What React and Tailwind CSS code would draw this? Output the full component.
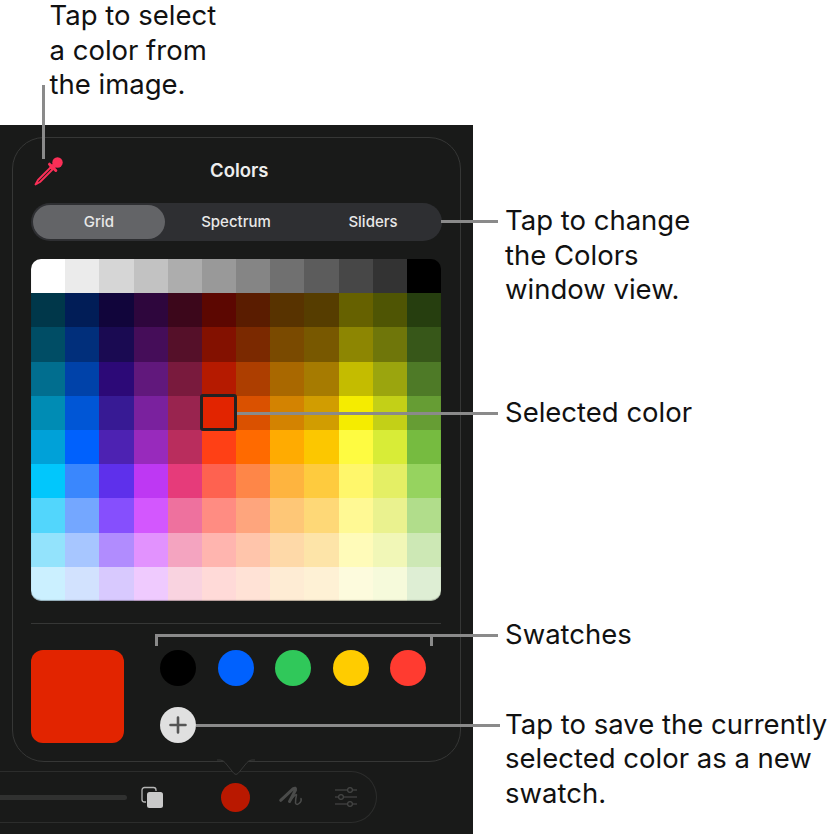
const COLORS = [
  'bg-[#FFFFFF]','bg-[#EBEBEB]','bg-[#D6D6D6]','bg-[#C2C2C2]','bg-[#ADADAD]','bg-[#999999]','bg-[#858585]','bg-[#707070]','bg-[#5C5C5C]','bg-[#474747]','bg-[#333333]','bg-[#000000]',
  'bg-[#00374A]','bg-[#011D57]','bg-[#11053B]','bg-[#2E063D]','bg-[#3C071B]','bg-[#5C0701]','bg-[#5A1C00]','bg-[#583300]','bg-[#563D00]','bg-[#666100]','bg-[#4F5504]','bg-[#263E0F]',
  'bg-[#004D65]','bg-[#012F7B]','bg-[#1A0A52]','bg-[#450D59]','bg-[#551029]','bg-[#831100]','bg-[#7B2900]','bg-[#7A4A00]','bg-[#785800]','bg-[#8D8602]','bg-[#6F760A]','bg-[#375719]',
  'bg-[#016E8F]','bg-[#0042A9]','bg-[#2C0977]','bg-[#61187C]','bg-[#791A3D]','bg-[#B51A00]','bg-[#AD3E00]','bg-[#A96800]','bg-[#A67B01]','bg-[#C4BC00]','bg-[#9BA50E]','bg-[#4E7A27]',
  'bg-[#008CB4]','bg-[#0056D6]','bg-[#371A94]','bg-[#7A219E]','bg-[#99244F]','bg-[#E22400]','bg-[#DA5100]','bg-[#D38301]','bg-[#D19D01]','bg-[#F5EC00]','bg-[#C3D017]','bg-[#669D34]',
  'bg-[#00A1D8]','bg-[#0061FD]','bg-[#4D22B2]','bg-[#982ABC]','bg-[#B92D5D]','bg-[#FF4015]','bg-[#FF6A00]','bg-[#FFAB01]','bg-[#FCC700]','bg-[#FEFB41]','bg-[#D8EC37]','bg-[#76BB40]',
  'bg-[#01C7FC]','bg-[#3A87FD]','bg-[#5E30EB]','bg-[#BE38F3]','bg-[#E63B7A]','bg-[#FE6250]','bg-[#FE8648]','bg-[#FEB43F]','bg-[#FECB3E]','bg-[#FFF76B]','bg-[#E4EF65]','bg-[#96D35F]',
  'bg-[#52D6FC]','bg-[#74A7FF]','bg-[#864FFD]','bg-[#D357FE]','bg-[#EE719E]','bg-[#FF8C82]','bg-[#FEA57D]','bg-[#FEC777]','bg-[#FED877]','bg-[#FFF994]','bg-[#EAF28F]','bg-[#B1DD8B]',
  'bg-[#93E3FC]','bg-[#A7C6FF]','bg-[#B18CFE]','bg-[#E292FE]','bg-[#F4A4C0]','bg-[#FFB5AF]','bg-[#FFC5AB]','bg-[#FED9A8]','bg-[#FDE4A8]','bg-[#FFFBB9]','bg-[#F1F7B7]','bg-[#CDE8B5]',
  'bg-[#CBF0FF]','bg-[#D2E2FE]','bg-[#D8C9FE]','bg-[#EFCAFE]','bg-[#F9D3E0]','bg-[#FFDAD8]','bg-[#FFE2D6]','bg-[#FEECD4]','bg-[#FEF1D5]','bg-[#FDFBDD]','bg-[#F6FADB]','bg-[#DEEED4]',
];

const SWATCHES = ['bg-[#000000]', 'bg-[#0061FE]', 'bg-[#30C85A]', 'bg-[#FFCC00]', 'bg-[#FF3B30]'];

function Eyedropper() {
  return (
    <svg width="30" height="30" viewBox="0 0 30 30" className="shrink-0">
      <circle cx="23.5" cy="6.5" r="5.2" fill="#fb2f57" />
      <path d="M15.5 8.2 L21.8 14.5" stroke="#fb2f57" strokeWidth="3" strokeLinecap="round" />
      <path d="M20 9.5 L17 12.5" stroke="#fb2f57" strokeWidth="5" />
      <path d="M16.5 11.5 L4 24 L1.5 28.5 L6 26 L18.5 13.5 Z" fill="none" stroke="#fb2f57" strokeWidth="1.8" strokeLinejoin="round" />
    </svg>
  );
}

function Toolbar() {
  return (
    <div className="flex items-center w-[377px] h-[52px] mt-[9px] rounded-r-[26px] border-y border-r border-[#2c2d2c]">
      <div className="w-[127px] h-[5px] rounded-r-full bg-[#303130]" />
      <svg width="24" height="24" viewBox="0 0 24 24" className="ml-[13px]">
        <path d="M6 17 H4.5 a2.5 2.5 0 0 1 -2.5 -2.5 V5 a2.5 2.5 0 0 1 2.5 -2.5 H13.5 a2.5 2.5 0 0 1 2.5 2.5 V6" fill="none" stroke="#b5b5b5" strokeWidth="1.3" />
        <rect x="7" y="7" width="16" height="16" rx="2.5" fill="#c9c9c9" />
      </svg>
      <div className="ml-[57px] w-[29px] h-[29px] rounded-full bg-[#B91800]" />
      <svg width="26" height="24" viewBox="0 0 26 24" className="ml-[28px]">
        <path d="M2.7 15.3 L15 3.8 Q18 2 17.5 5 L11.5 16.5" fill="none" stroke="#4a4b4a" strokeWidth="3" strokeLinecap="round" strokeLinejoin="round" />
        <path d="M11.5 16.5 Q18 8 18.5 10 Q17.5 14 17.5 18 Q18.5 20.5 21 18.5 Q24 16 23 13.5" fill="none" stroke="#4a4b4a" strokeWidth="1.5" strokeLinecap="round" strokeLinejoin="round" />
      </svg>
      <svg width="24" height="22" viewBox="0 0 24 22" className="ml-[30px]">
        <g stroke="#454645" strokeWidth="1.2" fill="#1a1b1a">
          <line x1="1" y1="4" x2="23" y2="4" />
          <line x1="1" y1="11" x2="23" y2="11" />
          <line x1="1" y1="18" x2="23" y2="18" />
          <circle cx="16" cy="4" r="2.4" />
          <circle cx="7" cy="11" r="2.4" />
          <circle cx="16" cy="18" r="2.4" />
        </g>
      </svg>
    </div>
  );
}

function Popover() {
  return (
    <div className="relative box-border w-[449px] h-[625px] ml-3 mt-3 px-[18px] rounded-[32px] border border-[#363736] bg-[#191a19]">
      <div className="flex items-center h-[65px] pl-[3px]">
        <Eyedropper />
        <span className="ml-[146px] text-[18.5px] font-semibold text-[#eeeeee]">Colors</span>
      </div>
      <div className="flex items-center gap-[5px] h-[38px] px-[2px] rounded-[19px] bg-[#2e2f32] text-[15px] font-medium text-[#e8e8e8]">
        <div className="flex items-center justify-center w-[132px] h-[34px] rounded-[17px] bg-[#636467]">Grid</div>
        <div className="flex items-center justify-center w-[132px] h-[34px]">Spectrum</div>
        <div className="flex items-center justify-center w-[132px] h-[34px]">Sliders</div>
      </div>
      <div className="relative mt-[18px]">
        <div className="grid grid-cols-12 grid-rows-10 w-[410px] h-[342px] rounded-[10px] overflow-hidden">
          {COLORS.map((c, i) => (
            <div key={i} className={c} />
          ))}
        </div>
        <div className="absolute left-0 top-0 w-[410px] h-[342px] rounded-[10px] shadow-[inset_0_-1px_1px_rgba(0,0,0,0.3)]" />
        <div className="absolute left-[169px] top-[135px] w-[37px] h-[37px] rounded-[3px] border-[3px] border-[#222222]" />
      </div>
      <div className="mt-[22px] w-[410px] h-px bg-[#363736]" />
      <div className="flex mt-[26px]">
        <div className="w-[93px] h-[93px] rounded-[12px] bg-[#E22400]" />
        <div className="ml-[36px]">
          <div className="flex gap-[21.5px]">
            {SWATCHES.map((c) => (
              <div key={c} className={`w-9 h-9 rounded-full ${c}`} />
            ))}
          </div>
          <div className="flex items-center justify-center w-9 h-9 mt-[21px] rounded-full bg-[#e0e0e0]">
            <svg width="18" height="18" viewBox="0 0 18 18">
              <path d="M9 1.5 V16.5 M1.5 9 H16.5" stroke="#555555" strokeWidth="2.6" strokeLinecap="round" />
            </svg>
          </div>
        </div>
      </div>
      <svg width="38" height="18" viewBox="0 0 38 18" className="absolute left-[204px] bottom-[-16px]">
        <path d="M0 1 H3 Q6 1 8 3.5 L17 14.5 Q19 16.5 21 14.5 L30 3.5 Q32 1 35 1 H38 V0 H0 Z" fill="#191a19" />
        <path d="M0 1 H3 Q6 1 8 3.5 L17 14.5 Q19 16.5 21 14.5 L30 3.5 Q32 1 35 1 H38" fill="none" stroke="#363736" strokeWidth="1" />
      </svg>
    </div>
  );
}

function Callouts() {
  const line = 'absolute bg-[#8a8a8a]';
  return (
    <>
      <div className={`${line} left-[42px] top-[85px] w-[2.5px] h-[74px]`} />
      <div className={`${line} left-[441px] top-[220px] w-[57px] h-[2.5px]`} />
      <div className={`${line} left-[237px] top-[412px] w-[261px] h-[2.5px]`} />
      <div className={`${line} left-[156px] top-[634px] w-[342px] h-[2.5px]`} />
      <div className={`${line} left-[155px] top-[634px] w-[2.5px] h-[12px]`} />
      <div className={`${line} left-[430px] top-[634px] w-[2.5px] h-[12px]`} />
      <div className={`${line} left-[196px] top-[724px] w-[304px] h-[2.5px]`} />
    </>
  );
}

export default function App() {
  return (
    <div className="relative w-[838px] h-[836px] bg-white overflow-hidden font-['Inter',sans-serif]">
      <div className="flex flex-col gap-[3.5px] h-[125px] pl-[49.5px] text-[27.5px] leading-[31px] text-[#111111]">
        <div>Tap to select</div>
        <div>a color from</div>
        <div>the image.</div>
      </div>
      <div className="flex">
        <div className="w-[473px] h-[709px] bg-[#191a19]">
          <Popover />
          <Toolbar />
        </div>
        <div className="flex flex-col pl-[32px] pt-[78px] text-[27.5px] leading-[34.5px] text-[#111111] whitespace-nowrap">
          <div>
            Tap to change
            <br />
            the Colors
            <br />
            window view.
          </div>
          <div className="mt-[88px]">Selected color</div>
          <div className="mt-[188px]">Swatches</div>
          <div className="mt-[55px]">
            Tap to save the currently
            <br />
            selected color as a new
            <br />
            swatch.
          </div>
        </div>
      </div>
      <Callouts />
    </div>
  );
}
